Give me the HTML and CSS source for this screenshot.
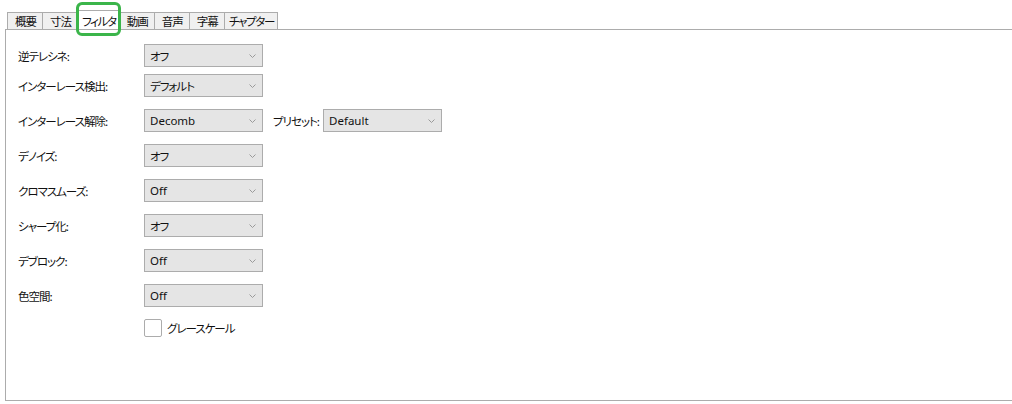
FILE: index.html
```html
<!DOCTYPE html>
<html lang="ja">
<head>
    <meta charset="UTF-8">
    <title>フィルタ</title>
    <link rel="stylesheet" href="styles.css">
</head>
<body>
    <div class="window">
        <div class="tabs">
            <div class="tab">概要</div>
            <div class="tab">寸法</div>
            <div class="tab selected">フィルタ</div>
            <div class="tab">動画</div>
            <div class="tab">音声</div>
            <div class="tab">字幕</div>
            <div class="tab kana">チャプター</div>
        </div>

        <div class="panel">
            <div class="row first">
                <span class="label">逆テレシネ:</span>
                <div class="combo"><span>オフ</span><svg class="chev" viewBox="0 0 7 4"><polyline points="0.5,0.5 3.5,3.5 6.5,0.5"/></svg></div>
            </div>
            <div class="row">
                <span class="label">インターレース検出:</span>
                <div class="combo"><span>デフォルト</span><svg class="chev" viewBox="0 0 7 4"><polyline points="0.5,0.5 3.5,3.5 6.5,0.5"/></svg></div>
            </div>
            <div class="row">
                <span class="label">インターレース解除:</span>
                <div class="combo"><span class="latin">Decomb</span><svg class="chev" viewBox="0 0 7 4"><polyline points="0.5,0.5 3.5,3.5 6.5,0.5"/></svg></div>
                <span class="sublabel">プリセット:</span>
                <div class="combo"><span class="latin">Default</span><svg class="chev" viewBox="0 0 7 4"><polyline points="0.5,0.5 3.5,3.5 6.5,0.5"/></svg></div>
            </div>
            <div class="row">
                <span class="label">デノイズ:</span>
                <div class="combo"><span>オフ</span><svg class="chev" viewBox="0 0 7 4"><polyline points="0.5,0.5 3.5,3.5 6.5,0.5"/></svg></div>
            </div>
            <div class="row">
                <span class="label">クロマスムーズ:</span>
                <div class="combo"><span class="latin">Off</span><svg class="chev" viewBox="0 0 7 4"><polyline points="0.5,0.5 3.5,3.5 6.5,0.5"/></svg></div>
            </div>
            <div class="row">
                <span class="label">シャープ化:</span>
                <div class="combo"><span>オフ</span><svg class="chev" viewBox="0 0 7 4"><polyline points="0.5,0.5 3.5,3.5 6.5,0.5"/></svg></div>
            </div>
            <div class="row">
                <span class="label">デブロック:</span>
                <div class="combo"><span class="latin">Off</span><svg class="chev" viewBox="0 0 7 4"><polyline points="0.5,0.5 3.5,3.5 6.5,0.5"/></svg></div>
            </div>
            <div class="row">
                <span class="label">色空間:</span>
                <div class="combo"><span class="latin">Off</span><svg class="chev" viewBox="0 0 7 4"><polyline points="0.5,0.5 3.5,3.5 6.5,0.5"/></svg></div>
            </div>
            <label class="check">
                <span class="box"></span>
                <span>グレースケール</span>
            </label>
        </div>
    </div>
</body>
</html>
```

FILE: styles.css
```css
:root {
    --border: #acacac;
    --combo-bg: #e5e5e5;
    --tab-bg: #f0f0f0;
    --highlight: #3bb54a;
}

body {
    margin: 0;
    background: #fff;
    font-family: "Noto Sans CJK JP", "Noto Sans", sans-serif;
    font-size: 11.5px;
    font-weight: 400;
    font-feature-settings: "palt";
    letter-spacing: -1px;
    color: #111;
}

.latin {
    font-family: "Noto Sans", "Noto Sans CJK JP", sans-serif;
    font-size: 11.5px;
    letter-spacing: 0;
}

.window {
    padding: 12px 0 0 5px;
}

/* tab strip */
.tabs {
    display: flex;
    margin-left: 2px;
    height: 17px;
    position: relative;
    z-index: 1;
}

.tab {
    height: 16px;
    line-height: 16px;
    padding: 0 6px 0 7px;
    background: var(--tab-bg);
    border: 1px solid var(--border);
    border-bottom: none;
    margin-right: -1px;
}

/* katakana labels run wide in this font, so tighten them */
.tab.kana {
    padding: 0 3px 0 4px;
    letter-spacing: -1.3px;
}

.tab.selected {
    position: relative;
    background: #fff;
    height: 18px;
    margin-top: -2px;
    line-height: 20px;
    padding: 0 3px 0 4px;
    letter-spacing: -1.3px;
}

/* the green outline around the active tab */
.tab.selected::after {
    content: "";
    position: absolute;
    left: -2px;
    right: -2px;
    top: -9px;
    bottom: -7px;
    border: 3px solid var(--highlight);
    border-radius: 6px;
}

.panel {
    border: 1px solid var(--border);
    border-right: none;
    height: 356px;
    padding: 14px 0 0 12px;
}

.row {
    display: flex;
    align-items: center;
    height: 23px;
    margin-bottom: 12px;
}

.row.first {
    margin-bottom: 7px;
}

.label {
    width: 126px;
}

.sublabel {
    margin: 0 4px 0 10px;
}

.combo {
    display: flex;
    align-items: center;
    justify-content: space-between;
    box-sizing: border-box;
    width: 119px;
    height: 23px;
    padding: 0 6px 0 5px;
    background: var(--combo-bg);
    border: 1px solid var(--border);
}

.chev {
    width: 7px;
    height: 4px;
    fill: none;
    stroke: #9a9a9a;
    stroke-width: 1;
}

.check {
    display: flex;
    align-items: center;
    margin: 1px 0 0 126px;
    height: 18px;
}

.box {
    box-sizing: border-box;
    width: 18px;
    height: 18px;
    border: 1px solid var(--border);
    border-radius: 2px;
    background: #fff;
    margin-right: 5px;
}
```
